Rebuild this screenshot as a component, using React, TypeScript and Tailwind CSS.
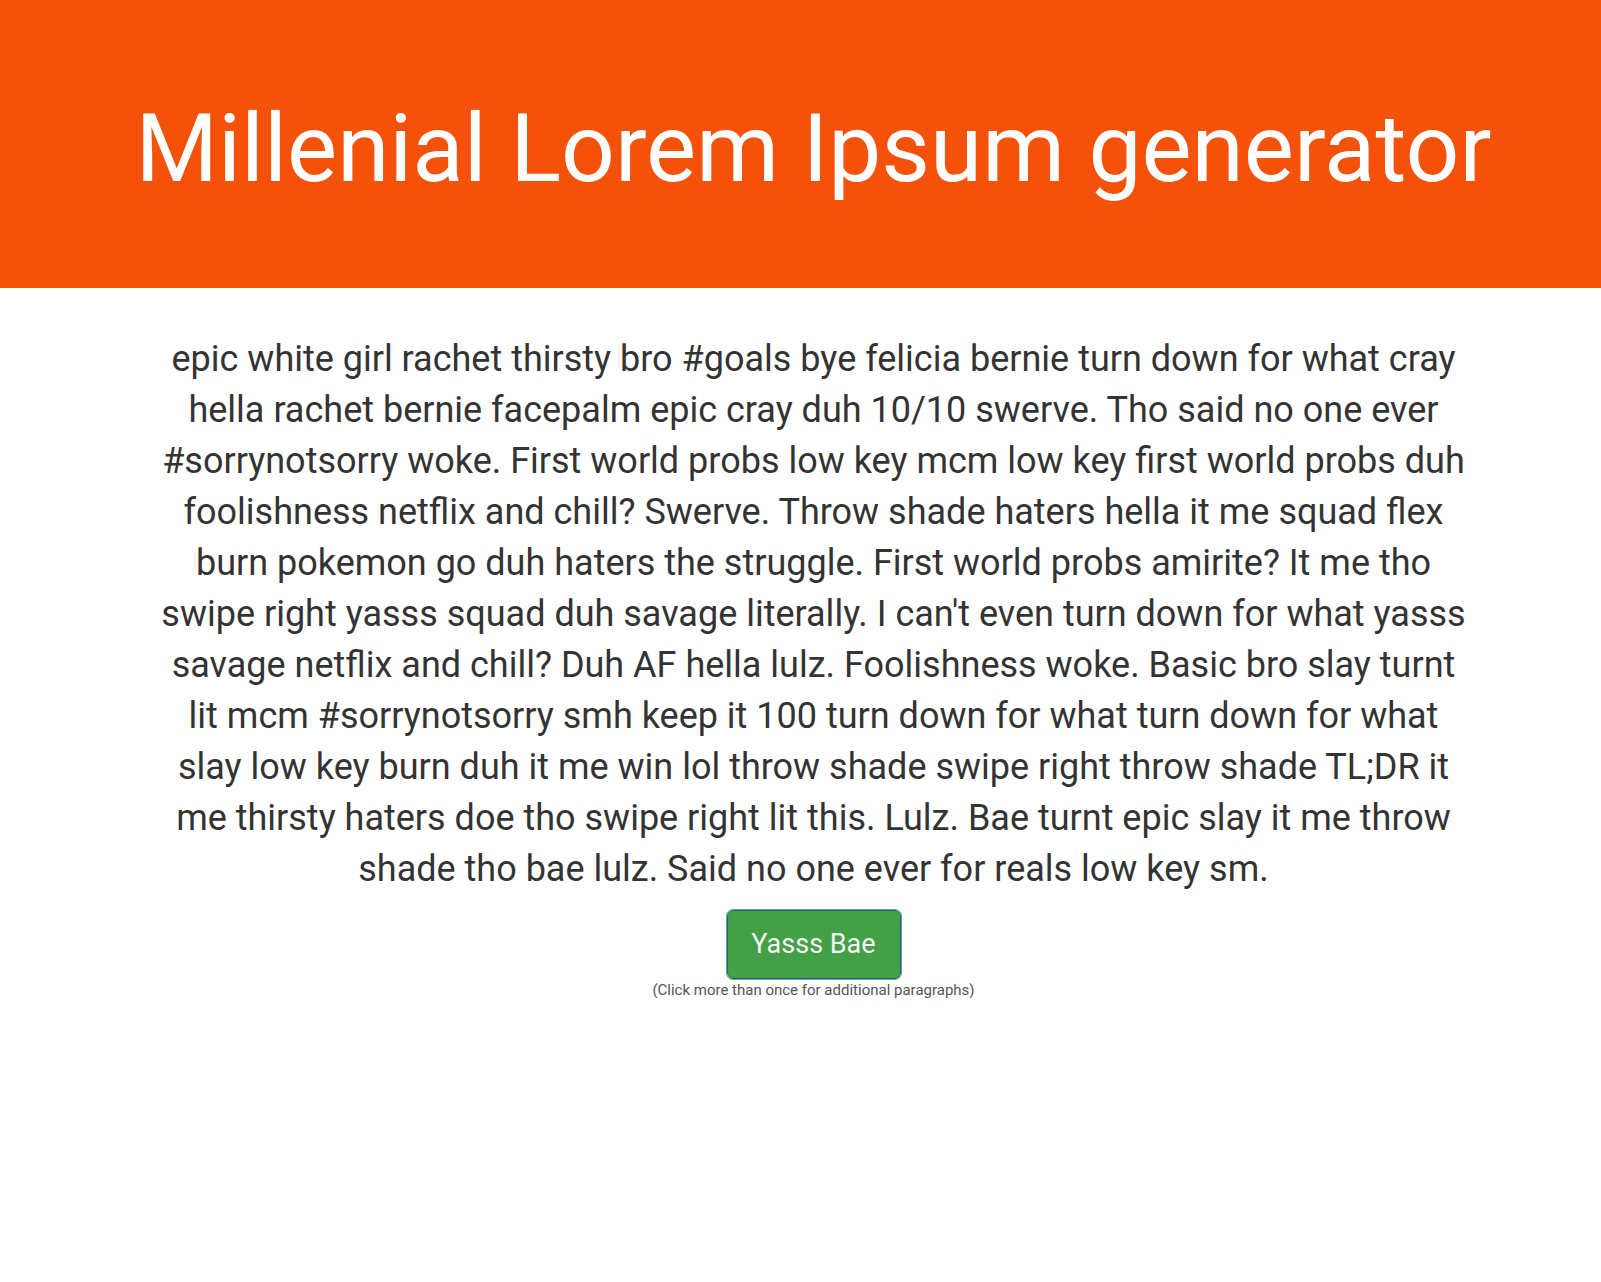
import React, { useState } from 'react'

const firstParagraph =
  "epic white girl rachet thirsty bro #goals bye felicia bernie turn down for what cray hella rachet bernie facepalm epic cray duh 10/10 swerve. Tho said no one ever #sorrynotsorry woke. First world probs low key mcm low key first world probs duh foolishness netflix and chill? Swerve. Throw shade haters hella it me squad flex burn pokemon go duh haters the struggle. First world probs amirite? It me tho swipe right yasss squad duh savage literally. I can't even turn down for what yasss savage netflix and chill? Duh AF hella lulz. Foolishness woke. Basic bro slay turnt lit mcm #sorrynotsorry smh keep it 100 turn down for what turn down for what slay low key burn duh it me win lol throw shade swipe right throw shade TL;DR it me thirsty haters doe tho swipe right lit this. Lulz. Bae turnt epic slay it me throw shade tho bae lulz. Said no one ever for reals low key sm."

export default function App() {
  const [paragraphs, setParagraphs] = useState<string[]>([firstParagraph])

  // more paragraphs, same words shuffled
  const addParagraph = () => {
    const words = firstParagraph.split(' ')
    const shuffled = [...words].sort(() => Math.random() - 0.5).join(' ')
    setParagraphs((p) => [...p, shuffled])
  }

  return (
    <div className="min-h-[1282px] bg-white font-['Roboto',sans-serif]">
      <header className="h-[288px] bg-[#f4510b] flex items-center justify-center pl-[26px]">
        <h1 className="text-white text-[94.5px] font-normal leading-none mt-[10px]">Millenial Lorem Ipsum generator</h1>
      </header>

      <main className="flex flex-col items-center pt-[46px] pl-[26px]">
        {paragraphs.map((p, i) => (
          <p key={i} className="w-[1310px] text-center text-[36px] leading-[51px] text-[#333]">
            {p}
          </p>
        ))}
        <button
          onClick={addParagraph}
          className="mt-[15px] w-[174px] h-[69px] rounded-[6px] bg-[#43a047] border border-[#2e6b31] outline outline-1 outline-[#5b9be6] text-[#f4f4f4] text-[27px] font-normal"
        >
          Yasss Bae
        </button>
        <p className="text-[15px] text-[#555]">(Click more than once for additional paragraphs)</p>
      </main>
    </div>
  )
}
